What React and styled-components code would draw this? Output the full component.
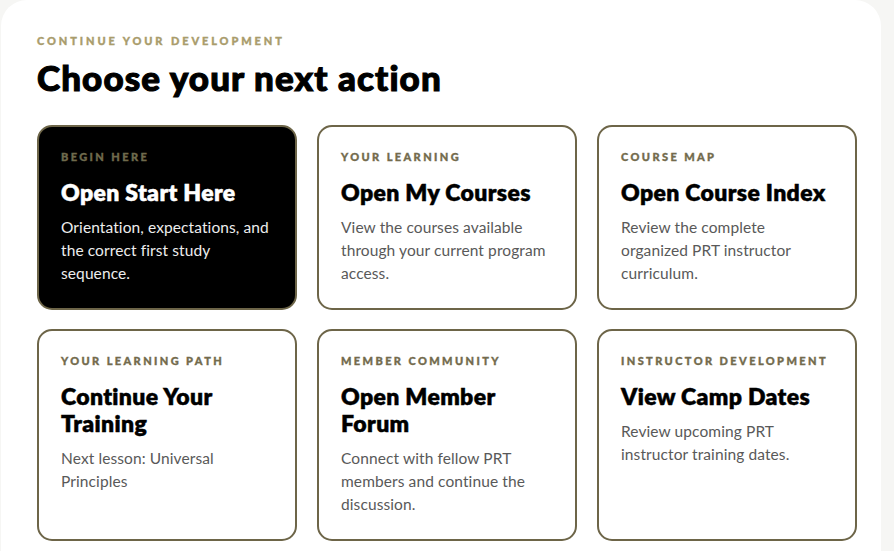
import React from 'react';
import styled, { createGlobalStyle } from 'styled-components';

const GlobalStyle = createGlobalStyle`
  html, body {
    margin: 0;
    padding: 0;
    background: #f6f6f4;
  }
  body {
    font-family: 'Lato', 'Liberation Sans', sans-serif;
  }
`;

const Panel = styled.section`
  box-sizing: border-box;
  width: 880px;
  margin-left: 1px;
  min-height: 551px;
  background: #ffffff;
  border-radius: 26px 26px 0 0;
  padding: 34px 23px 0 36px;
`;

const Eyebrow = styled.div`
  font-family: 'Lato', sans-serif;
  font-weight: 900;
  font-size: 11px;
  line-height: 14px;
  letter-spacing: 2.9px;
  text-transform: uppercase;
  -webkit-text-stroke: 0.35px currentColor;
  color: #a99c6c;
`;

const Heading = styled.h1`
  margin: 8px 0 27px;
  font-family: 'Lato', sans-serif;
  font-weight: 900;
  font-size: 35px;
  line-height: 42px;
  letter-spacing: 1.1px;
  -webkit-text-stroke: 1.1px #000;
  color: #000;
`;

const Grid = styled.div`
  display: grid;
  grid-template-columns: repeat(3, 260px);
  column-gap: 20px;
  row-gap: 19px;
  align-items: stretch;
`;

const Card = styled.a`
  box-sizing: border-box;
  display: flex;
  flex-direction: column;
  padding: 23px 24px 23px 22px;
  border: 2px solid #6d6548;
  border-radius: 15px;
  background: ${p => (p.$dark ? '#000' : '#fff')};
  color: ${p => (p.$dark ? '#fff' : '#000')};
  text-decoration: none;
  cursor: pointer;
`;

const CardTag = styled(Eyebrow)`
  letter-spacing: 2.4px;
  color: ${p => (p.$dark ? '#6f6a4c' : '#736b4d')};
`;

const CardTitle = styled.h2`
  margin: 15px 0 10px;
  font-family: 'Lato', sans-serif;
  font-weight: 800;
  font-size: 23px;
  line-height: 27px;
  letter-spacing: 0.35px;
  -webkit-text-stroke: 0.45px currentColor;
  color: inherit;
`;

const CardText = styled.p`
  margin: 0;
  font-family: 'Lato', sans-serif;
  font-weight: 400;
  font-size: 15.5px;
  line-height: 23px;
  letter-spacing: 0.1px;
  color: ${p => (p.$dark ? '#ededed' : '#595959')};
`;

const actions = [
  { tag: 'Begin Here', title: 'Open Start Here', text: 'Orientation, expectations, and the correct first study sequence.', dark: true },
  { tag: 'Your Learning', title: 'Open My Courses', text: 'View the courses available through your current program access.' },
  { tag: 'Course Map', title: 'Open Course Index', text: 'Review the complete organized PRT instructor curriculum.' },
  { tag: 'Your Learning Path', title: 'Continue Your Training', text: 'Next lesson: Universal Principles' },
  { tag: 'Member Community', title: 'Open Member Forum', text: 'Connect with fellow PRT members and continue the discussion.' },
  { tag: 'Instructor Development', title: 'View Camp Dates', text: 'Review upcoming PRT instructor training dates.' },
];

const App = () => (
  <>
    <GlobalStyle />
    <Panel>
      <Eyebrow>Continue your development</Eyebrow>
      <Heading>Choose your next action</Heading>
      <Grid>
        {actions.map(a => (
          <Card key={a.title} $dark={a.dark}>
            <CardTag $dark={a.dark}>{a.tag}</CardTag>
            <CardTitle>{a.title}</CardTitle>
            <CardText $dark={a.dark}>{a.text}</CardText>
          </Card>
        ))}
      </Grid>
    </Panel>
  </>
);

export default App;
